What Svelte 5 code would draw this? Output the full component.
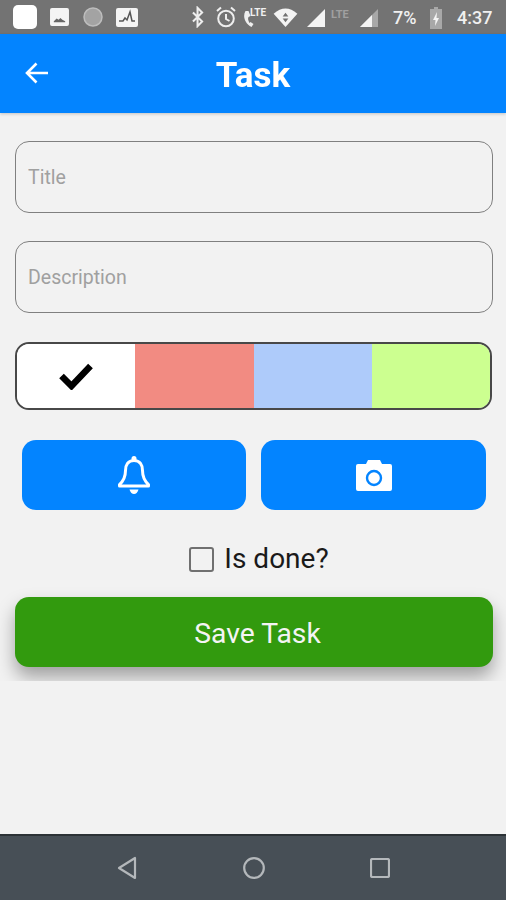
<script lang="ts">
  // Task editor screen: status bar, header, form and Android nav bar.
  const swatches = [
    { color: '#ffffff', selected: true },
    { color: '#f28b82', selected: false },
    { color: '#aecbfa', selected: false },
    { color: '#ccff90', selected: false }
  ]
  let done = $state(false)
</script>

<div class="screen">
  <div class="status">
    <svg class="st-app" viewBox="0 0 24 24"><rect width="24" height="24" rx="5" fill="#fff"/></svg>
    <svg class="st-photo" viewBox="0 0 20 19">
      <rect width="20" height="19" rx="2" fill="#f4f4f4"/>
      <path d="M4 14l3-3 2 1.500 2-2 2 2 3 1.500v1H4z" fill="#666"/>
    </svg>
    <svg class="st-circle" viewBox="0 0 20 20">
      <circle cx="10" cy="10" r="9" fill="#a3a3a3" stroke="#bdbdbd" stroke-width="1.500"/>
    </svg>
    <svg class="st-pulse" viewBox="0 0 22 19">
      <rect width="22" height="19" rx="2" fill="#f4f4f4"/>
      <path d="M3 13h4l2-3 2 2 3-8 2 9h3" fill="none" stroke="#555" stroke-width="1.500"/>
    </svg>
    <svg class="st-bt" viewBox="0 0 14 24">
      <path d="M1.500 7l10 10-5 5V2l5 5-10 10" fill="none" stroke="#eee" stroke-width="2.200"/>
    </svg>
    <svg class="st-alarm" viewBox="0 0 20 22">
      <circle cx="10" cy="12.500" r="7.800" fill="none" stroke="#eee" stroke-width="2"/>
      <path d="M10 8v5l3.500 2M1 5l4-3.500M19 5l-4-3.500" fill="none" stroke="#eee" stroke-width="2"/>
    </svg>
    <div class="st-phone">
      <svg viewBox="0 0 10 18">
        <path d="M2 1c-3 5-1 12 6 16l2-3-3-2-1 1c-1-2-2-4-1-6l2-1-2-5z" fill="#eee"/>
      </svg>
      <span>LTE</span>
    </div>
    <svg class="st-wifi" viewBox="0 0 25 20">
      <path d="M12.500 20L0 6q12.500-11 25 0z" fill="#f4f4f4"/>
      <path d="M12.500 5l3 4h-6zM9.500 11h6l-3 4z" fill="#737373"/>
    </svg>
    <svg class="st-signal" viewBox="0 0 18 18"><path d="M18 0v18H0z" fill="#f4f4f4"/></svg>
    <span class="st-lte">LTE</span>
    <svg class="st-signal second" viewBox="0 0 18 18">
      <path d="M18 0v18H0z" fill="#a8a8a8"/>
      <path d="M12 6v12H0z" fill="#f4f4f4"/>
    </svg>
    <span class="st-pct">7%</span>
    <svg class="st-batt" viewBox="0 0 12 22">
      <path d="M4 0h4v2h4v20H0V2h4z" fill="#a8a8a8"/>
      <path d="M7 5l-4 8h2.500L5 19l4-8H6.500z" fill="#f4f4f4"/>
    </svg>
    <span class="st-time">4:37</span>
  </div>

  <header class="topbar">
    <svg class="back" viewBox="0 0 24 22">
      <path d="M23 11H2M11.500 1.500L2 11l9.500 9.500" fill="none" stroke="#fff" stroke-width="2.600"/>
    </svg>
    <h1>Task</h1>
  </header>

  <main class="content">
    <form class="form">
      <input class="field" type="text" placeholder="Title" />
      <input class="field" type="text" placeholder="Description" />

      <div class="swatches">
        {#each swatches as s}
          <div class="swatch" style="background: {s.color}">
            {#if s.selected}
              <svg class="check" viewBox="0 0 36 28">
                <path d="M3.500 14l10 10L32.500 4" fill="none" stroke="#000" stroke-width="6.500"/>
              </svg>
            {/if}
          </div>
        {/each}
      </div>

      <div class="actions">
        <button type="button" class="action" aria-label="Reminder">
          <svg class="bell" viewBox="0 0 32 38">
            <path d="M16 4.500c-6 0-8.500 4.500-8.500 10 0 6-1.500 10-6 14v1.500h29v-1.500c-4.500-4-6-8-6-14 0-5.500-2.500-10-8.500-10z" fill="none" stroke="#fff" stroke-width="3" stroke-linejoin="round"/>
            <circle cx="16" cy="2.500" r="2.500" fill="#fff"/>
            <path d="M11.500 33.500h9c-1 3-2.500 4.500-4.500 4.500s-3.500-1.500-4.500-4.500z" fill="#fff"/>
          </svg>
        </button>
        <button type="button" class="action" aria-label="Photo">
          <svg class="camera" viewBox="0 0 36 31">
            <path d="M10 4l2-4h12l2 4h8a2 2 0 0 1 2 2v23a2 2 0 0 1-2 2H2a2 2 0 0 1-2-2V6a2 2 0 0 1 2-2z" fill="#fff"/>
            <circle cx="18" cy="18" r="7" fill="none" stroke="#0384ff" stroke-width="2.400"/>
          </svg>
        </button>
      </div>

      <label class="done">
        <input type="checkbox" bind:checked={done} />
        <span>Is done?</span>
      </label>

      <button type="button" class="save">Save Task</button>
    </form>
  </main>

  <nav class="navbar">
    <svg class="nav-back" viewBox="0 0 20 24">
      <path d="M18 2v20L2 12z" fill="none" stroke="#b4b8bb" stroke-width="2.200" stroke-linejoin="round"/>
    </svg>
    <svg class="nav-home" viewBox="0 0 22 22">
      <circle cx="11" cy="11" r="9.800" fill="none" stroke="#b4b8bb" stroke-width="2.200"/>
    </svg>
    <svg class="nav-recent" viewBox="0 0 20 20">
      <rect x="1" y="1" width="18" height="18" rx="1.500" fill="none" stroke="#b4b8bb" stroke-width="2.200"/>
    </svg>
  </nav>
</div>

<style>
  :global(body) {
    margin: 0;
    background: #f2f2f2;
  }
  .screen {
    display: flex;
    flex-direction: column;
    height: 900px;
    font-family: Roboto, "Liberation Sans", sans-serif;
    background: #f2f2f2;
    /* the source shot is an upscaled capture, soft on every edge */
    filter: blur(0.45px);
  }

  /* status bar */
  .status {
    display: flex;
    align-items: center;
    flex: none;
    height: 34px;
    padding-left: 13px;
    background: #737373;
    color: #f0f0f0;
  }
  .status svg {
    display: block;
    flex: none;
  }
  .st-app { width: 24px; height: 24px; }
  .st-photo { width: 19px; height: 18px; margin-left: 13px; }
  .st-circle { width: 20px; height: 20px; margin-left: 14px; }
  .st-pulse { width: 22px; height: 19px; margin-left: 13px; }
  .st-bt { width: 14px; height: 22px; margin-left: 53px; }
  .st-alarm { width: 20px; height: 22px; margin-left: 11px; }
  .st-phone {
    position: relative;
    width: 25px;
    height: 22px;
    margin-left: 7px;
  }
  .st-phone svg {
    width: 11px;
    height: 18px;
    margin-top: 4px;
  }
  .st-phone span {
    position: absolute;
    top: 0;
    left: 7px;
    font-size: 10px;
    font-weight: 700;
    line-height: 14px;
  }
  .st-wifi { width: 25px; height: 19px; margin-left: 5px; }
  .st-signal { width: 18px; height: 18px; margin-left: 9px; margin-top: 2px; }
  .st-signal.second { margin-left: 7px; }
  .st-lte {
    width: 22px;
    margin-left: 6px;
    margin-bottom: 6px;
    font-size: 11px;
    font-weight: 700;
    color: #a0a0a0;
  }
  .st-pct {
    width: 26px;
    margin-left: 15px;
    font-size: 18px;
    font-weight: 500;
    white-space: nowrap;
  }
  .st-batt { width: 12px; height: 22px; margin-left: 11px; margin-top: 2px; }
  .st-time {
    margin-left: 15px;
    font-size: 18px;
    font-weight: 500;
  }

  /* header */
  .topbar {
    position: relative;
    z-index: 1;
    display: flex;
    align-items: center;
    justify-content: center;
    flex: none;
    height: 79px;
    background: #0384ff;
    box-shadow: 0 1px 3px rgba(0, 0, 0, 0.2);
  }
  .back {
    position: absolute;
    left: 25px;
    top: 28px;
    width: 24px;
    height: 22px;
  }
  .topbar h1 {
    margin: 4px 0 0;
    font-size: 35px;
    font-weight: 700;
    color: #fff;
  }

  /* form */
  .content {
    flex: 1;
  }
  .form {
    display: flex;
    flex-direction: column;
    padding: 28px 0 14px;
    overflow: hidden;
  }
  .field {
    box-sizing: border-box;
    height: 72px;
    margin: 0 13px 28px 15px;
    padding: 0 12px;
    border: 1.600px solid #808080;
    border-radius: 14px;
    background: transparent;
    font-family: inherit;
    font-size: 19.500px;
    outline: none;
  }
  .field::placeholder {
    color: #a0a0a0;
  }
  .swatches {
    display: flex;
    height: 68px;
    margin: 1px 14px 30px 15px;
    border: 2px solid #484848;
    border-radius: 14px;
    box-sizing: border-box;
    overflow: hidden;
  }
  .swatch {
    display: flex;
    flex: 1;
    align-items: center;
    justify-content: center;
  }
  .check {
    width: 36px;
    height: 28px;
  }
  .actions {
    display: flex;
    gap: 15px;
    margin: 0 20px 0 21.500px;
  }
  .action {
    display: flex;
    flex: 1;
    align-items: center;
    justify-content: center;
    height: 70px;
    padding: 0;
    border: none;
    border-radius: 14px;
    background: #0384ff;
  }
  .bell {
    width: 32px;
    height: 38px;
  }
  .camera {
    width: 36px;
    height: 31px;
  }
  .done {
    display: flex;
    align-items: center;
    justify-content: center;
    gap: 10px;
    height: 38px;
    margin: 29px 0 20px;
    padding-left: 12px;
    font-size: 28px;
    color: #1a1a1a;
  }
  .done input {
    appearance: none;
    box-sizing: border-box;
    width: 25px;
    height: 25px;
    margin: 3px 0 0;
    border: 2.500px solid #707070;
    border-radius: 3px;
    background: transparent;
  }
  .save {
    height: 70px;
    margin: 0 13px 0 15px;
    padding: 2px 0 0 7px;
    border: none;
    border-radius: 14px;
    background: #329a0e;
    box-shadow: 0 10px 18px rgba(0, 0, 0, 0.34);
    font-family: inherit;
    font-size: 28.300px;
    color: #f4f4f4;
  }

  /* android nav */
  .navbar {
    position: relative;
    flex: none;
    height: 64px;
    border-top: 2px solid #2c3236;
    background: #474f56;
  }
  .navbar svg {
    position: absolute;
  }
  .nav-back { left: 117px; top: 20px; width: 20px; height: 24px; }
  .nav-home { left: 243px; top: 21px; width: 22px; height: 22px; }
  .nav-recent { left: 370px; top: 22px; width: 20px; height: 20px; }
</style>
